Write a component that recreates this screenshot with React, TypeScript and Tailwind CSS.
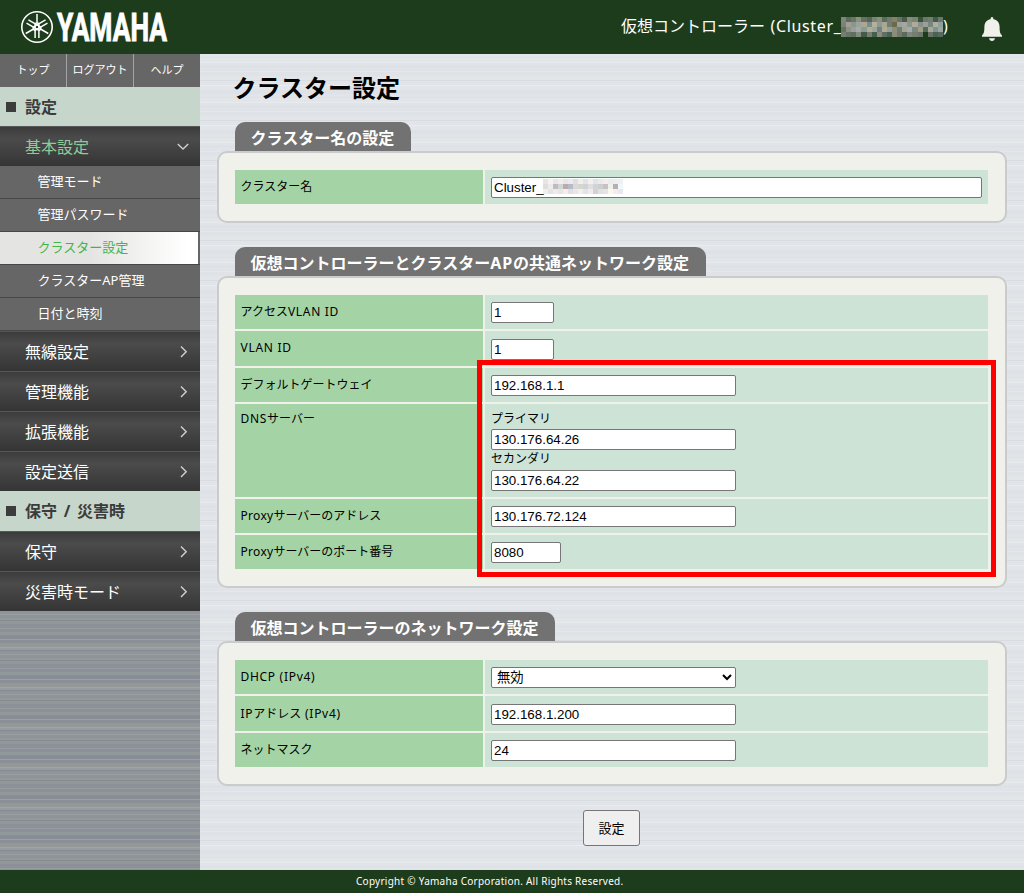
import type { ReactNode } from "react";

const HEADER_MASK = [
  ["#7f857b", "#5d6a5d", "#6b7668", "#8b917f", "#677063", "#56645a", "#7b8374", "#8b8f80", "#5f6b5e", "#717b70", "#85816a", "#6b7468", "#4b5a4c", "#858c7e", "#7b8377", "#37513b", "#6d786d", "#737d72", "#3f5c4e", "#69776d"],
  ["#7c8278", "#a19f8f", "#8b968f", "#9aa39c", "#aaa893", "#7b8c8c", "#b5b09a", "#8a9a96", "#a9a790", "#6d7e78", "#6c684a", "#98a39d", "#a2a8a0", "#8c958b", "#adab99", "#87908a", "#9aa098", "#76877f", "#b0aea0", "#8fa09c"],
  ["#68715f", "#8d9187", "#97a19c", "#a5aba4", "#8b9a94", "#b0ad98", "#9ea59b", "#70837f", "#adab95", "#979e94", "#8c8e7c", "#6f7e72", "#a4a294", "#a4aca7", "#7b8983", "#a29d86", "#556a58", "#a6a999", "#7f9390", "#9ba6a1"],
  ["#757e70", "#67746a", "#5f6f60", "#848c7e", "#47594a", "#777f70", "#43604f", "#8b8e7d", "#606f64", "#496353", "#8b8c7a", "#717a6b", "#5c6b5c", "#7e877b", "#737e70", "#6c766a", "#1d3c1c", "#687466", "#496253", "#58695d"],
];

const INPUT_MASK = [
  ["#e8e6e5", "#f4f2f3", "#e7e7e9", "#f0edec", "#e6e6e6", "#eeeae9", "#dedfe3", "#f1efed", "#e3e4e5", "#f0f0f0", "#e5e4e3", "#e9eaf0", "#f2eeed", "#ebecee", "#e9eff5", "#eef0f2"],
  ["#dfdedd", "#eeeceb", "#bdbcc0", "#d2d6d6", "#bea9af", "#b9b9ce", "#dad9d8", "#d6d6ce", "#cfd2d6", "#e3dddd", "#c9d6db", "#d2cccb", "#c4c2c3", "#eef0ed", "#b9aeae", "#f1f8fb"],
  ["#f0efee", "#e3e4e6", "#ecebea", "#e6e4e5", "#f0efed", "#dfe1e0", "#e9e7e5", "#f0f0ef", "#e1e4e8", "#efecec", "#dccfce", "#d9e4e7", "#e9e4e1", "#fbf8ef", "#efefef", "#e8e9f0"],
];

function Mosaic({ cells, className }: { cells: string[][]; className: string }) {
  return (
    <svg
      className={className}
      viewBox={`0 0 ${cells[0].length * 5} ${cells.length * 5}`}
      preserveAspectRatio="none"
      shapeRendering="crispEdges"
    >
      {cells.map((row, y) =>
        row.map((fill, x) => (
          <rect key={`${x}-${y}`} x={x * 5} y={y * 5} width="5" height="5" fill={fill} />
        ))
      )}
    </svg>
  );
}

function Logo() {
  const fork = "M0 -13 V-4 M-1.9 11 V-2.4 Q-1.9 -4 0 -4 Q1.9 -4 1.9 -2.4 V11";
  return (
    <svg className="ml-5 h-[54px] w-[220px] overflow-visible" viewBox="20 0 220 54">
      <g transform="translate(37 27)" fill="none" stroke="#fff">
        <circle r="15.2" strokeWidth="1.6" />
        <path d={fork} strokeWidth="1.5" />
        <path d={fork} strokeWidth="1.5" transform="rotate(120)" />
        <path d={fork} strokeWidth="1.5" transform="rotate(240)" />
      </g>
      <text
        x="57"
        y="41"
        textLength="110"
        lengthAdjust="spacingAndGlyphs"
        className="fill-white stroke-white stroke-[0.9px] font-['Roboto','Liberation_Sans',sans-serif] text-[38px] font-bold"
      >
        YAMAHA
      </text>
    </svg>
  );
}

function Header() {
  return (
    <header className="flex h-[54px] items-center bg-[#1d3c1c] text-white">
      <Logo />
      <div className="ml-auto flex items-center text-base leading-6 whitespace-nowrap">
        <span className="-mt-0.5 w-[220px]">
          仮想コントローラー<span className="pl-[5.5px] tracking-[0.65px]">(Cluster_</span>
        </span>
        <Mosaic cells={HEADER_MASK} className="h-5 w-[102px]" />
        <span className="-mt-0.5 w-2">)</span>
      </div>
      <svg className="mt-1 mr-[22px] ml-[31px] h-6 w-5" viewBox="0 0 20 24" fill="#f0f1eb">
        <path d="M8.6 2.2C8.6 0.9 9 0 10 0s1.4 0.9 1.4 2.2C15.8 2.9 17.6 6 17.6 9.8c0 5 0.6 7.2 2.4 8.4v1.6H0v-1.6c1.8-1.2 2.4-3.4 2.4-8.4C2.4 6 4.2 2.9 8.6 2.2Z" />
        <path d="M7 21.3h6c-0.3 1.6-1.3 2.7-3 2.7s-2.7-1.1-3-2.7Z" />
      </svg>
    </header>
  );
}

function NavHeading({ children, className }: { children: ReactNode; className: string }) {
  return (
    <h2
      className={`flex items-center bg-[#c6d6cb] pl-1.5 text-base font-bold whitespace-pre text-[#3c3c3c] [word-spacing:2.5px] ${className}`}
    >
      <span className="mr-[9px] size-2.5 bg-[#3c3c3c]" />
      {children}
    </h2>
  );
}

function NavItem({ label, open = false }: { label: string; open?: boolean }) {
  return (
    <a
      href="#"
      className={`flex h-10 items-center justify-between border-t border-[#575757] bg-linear-to-b from-[#3c3c3c] via-[#4b4b4b] via-30% to-[#353535] pr-[11px] pl-[25px] text-base ${
        open ? "text-[#8ecb98]" : "text-white"
      }`}
    >
      {label}
      <svg className="size-3" viewBox="0 0 12 12" fill="none" stroke="#d0d0d0" strokeWidth="1.4">
        <path d={open ? "M0.8 3 L6 8 L11.2 3" : "M4 0.5 L9.2 5.8 L4 11"} />
      </svg>
    </a>
  );
}

const SUB_ITEMS = ["管理モード", "管理パスワード", "クラスター設定", "クラスターAP管理", "日付と時刻"];

function Sidebar() {
  return (
    <aside className="w-[200px] shrink-0 bg-[repeating-linear-gradient(180deg,#9a9fa3_0_1px,#8e9399_1px_4px,#949a9a_4px_6px,#868b90_6px_7px,#92979a_7px_10px,#8c9199_10px_14px,#989da2_14px_15px,#8c9199_15px_18px,#92999a_18px_21px,#898e96_21px_25px,#9ba0a5_25px_26px,#8b9098_26px_29px,#929898_29px_33px,#a0a5aa_33px_34px,#979d9e_34px_36px,#858a91_36px_37px,#8f949b_37px_40px)]">
      <div className="flex h-[33px] bg-[#666] text-center text-[11px] leading-[32px] text-white">
        <a href="#" className="w-[67px] border-r border-[#a4a4a4]">トップ</a>
        <a href="#" className="w-[67px] border-r border-[#a4a4a4]">ログアウト</a>
        <a href="#" className="flex-1">ヘルプ</a>
      </div>
      <NavHeading className="h-[39px]">設定</NavHeading>
      <NavItem label="基本設定" open />
      <ul className="bg-[#666] text-[13px] text-white">
        {SUB_ITEMS.map((item) => (
          <li key={item} className="h-[33px] border-b border-[#464646]">
            <a
              href="#"
              className={`block h-8 pl-[37.5px] leading-[30px] ${
                item === "クラスター設定"
                  ? "w-[198px] bg-linear-to-r from-[#e4e4e2] from-45% to-white to-95% text-[#43b549]"
                  : ""
              }`}
            >
              {item}
            </a>
          </li>
        ))}
      </ul>
      <NavItem label="無線設定" />
      <NavItem label="管理機能" />
      <NavItem label="拡張機能" />
      <NavItem label="設定送信" />
      <NavHeading className="h-10">保守 / 災害時</NavHeading>
      <NavItem label="保守" />
      <NavItem label="災害時モード" />
    </aside>
  );
}

function Section({ title, children }: { title: ReactNode; children: ReactNode }) {
  return (
    <section className="mb-6">
      <h2 className="ml-[18px] h-[29px] w-fit rounded-t-[10px] bg-[#727272] pr-[16.5px] pl-[15.5px] text-base leading-[33px] font-bold text-white">
        {title}
      </h2>
      <div className="relative rounded-[10px] border-2 border-[#c9cbcc] bg-[#f0f1eb] py-[17px] pr-[17px] pl-4">
        <div className="flex flex-col gap-0.5">{children}</div>
      </div>
    </section>
  );
}

// Latin part of a label, set a little wider than the kana around it
function Wide({ children }: { children: ReactNode }) {
  return <span className="tracking-[0.7px]">{children}</span>;
}

type RowProps = { label: ReactNode; labelPad?: string; className?: string; children: ReactNode };

function Row({ label, labelPad = "pt-2", className = "h-[34px] pt-[7px]", children }: RowProps) {
  return (
    <div className="flex gap-0.5">
      <div className={`w-[248px] bg-[#a4d4a5] pl-[5.5px] text-xs leading-[18px] ${labelPad}`}>{label}</div>
      <div className={`flex flex-1 flex-col items-start bg-[#cde3d6] px-1.5 text-xs ${className}`}>
        {children}
      </div>
    </div>
  );
}

const FIELD =
  "block h-[21px] shrink-0 rounded-[2px] border border-[#767676] bg-white font-['Liberation_Sans','Noto_Sans_CJK_JP',sans-serif] text-[13.333px] leading-[19px] text-black";

function Field({ value, width = "w-[245px]" }: { value: string; width?: string }) {
  return <input type="text" defaultValue={value} className={`${FIELD} px-0.5 ${width}`} />;
}

export default function App() {
  return (
    <div className="flex h-[893px] w-[1024px] flex-col overflow-hidden font-['Noto_Sans','Noto_Sans_CJK_JP',sans-serif] text-black">
      <Header />
      <div className="flex flex-1">
        <Sidebar />
        <main className="flex-1 bg-[repeating-linear-gradient(180deg,#e1e4e8_0_3px,#dde0e5_3px_4px,#e2e6e9_4px_8px,#e8ebee_8px_9px,#e0e3e7_9px_12px,#dcdfe4_12px_13px,#e0e3e8_13px_17px,#e5e8eb_17px_18px,#dfe2e7_18px_22px,#e3e6e9_22px_26px,#d9dce1_26px_27px,#e1e4e8_27px_31px,#eaedf0_31px_32px,#e2e5e9_32px_36px,#dee1e6_36px_40px)] px-[17px]">
          <h1 className="h-[68px] pt-[17px] pl-[15.5px] text-2xl leading-[34px] font-bold">クラスター設定</h1>

          <Section title="クラスター名の設定">
            <Row label="クラスター名">
              <div className="relative">
                <Field value="Cluster_" width="w-[491px]" />
                <Mosaic cells={INPUT_MASK} className="absolute top-0.5 left-[52px] h-[15px] w-20" />
              </div>
            </Row>
          </Section>

          <Section
            title={
              <>
                仮想コントローラーとクラスター<span className="tracking-[0.9px]">AP</span>の共通ネットワーク設定
              </>
            }
          >
            <Row label={<>アクセス<Wide>VLAN ID</Wide></>}>
              <Field value="1" width="w-[63px]" />
            </Row>
            <Row label={<Wide>VLAN ID</Wide>} className="h-[35px] pt-2">
              <Field value="1" width="w-[63px]" />
            </Row>
            <Row label="デフォルトゲートウェイ">
              <Field value="192.168.1.1" />
            </Row>
            <Row label={<><Wide>DNS</Wide>サーバー</>} labelPad="pt-1.5" className="h-[93px] pt-[5px]">
              <span className="leading-5">プライマリ</span>
              <Field value="130.176.64.26" />
              <span className="h-5 leading-[18px]">セカンダリ</span>
              <Field value="130.176.64.22" />
            </Row>
            <Row label={<><span className="tracking-[0.3px]">Proxy</span>サーバーのアドレス</>}>
              <Field value="130.176.72.124" />
            </Row>
            <Row label={<><span className="tracking-[0.3px]">Proxy</span>サーバーのポート番号</>}>
              <Field value="8080" width="w-[70px]" />
            </Row>
            {/* Highlight around the values */}
            <div className="pointer-events-none absolute top-[82px] left-[258px] h-[217px] w-[519px] border-5 border-[#ff0000]" />
          </Section>

          <Section title="仮想コントローラーのネットワーク設定">
            <Row label={<Wide>DHCP (IPv4)</Wide>}>
              <select className={`${FIELD} w-[245px] pl-px`}>
                <option>無効</option>
                <option>有効</option>
              </select>
            </Row>
            <Row label={<><Wide>IP</Wide>アドレス<Wide> (IPv4)</Wide></>} labelPad="pt-[9px]" className="h-[35px] pt-2">
              <Field value="192.168.1.200" />
            </Row>
            <Row label="ネットマスク">
              <Field value="24" />
            </Row>
          </Section>

          <button className="ml-[366px] block h-9 w-[57px] rounded-[3px] border border-[#767676] bg-[#efefef] pt-0.5 text-[13px]">
            設定
          </button>
        </main>
      </div>
      <footer className="h-[23px] bg-[#1d3c1c] pl-[356px] text-[10px] leading-[23px] tracking-[0.26px] text-white">
        Copyright © Yamaha Corporation. All Rights Reserved.
      </footer>
    </div>
  );
}
